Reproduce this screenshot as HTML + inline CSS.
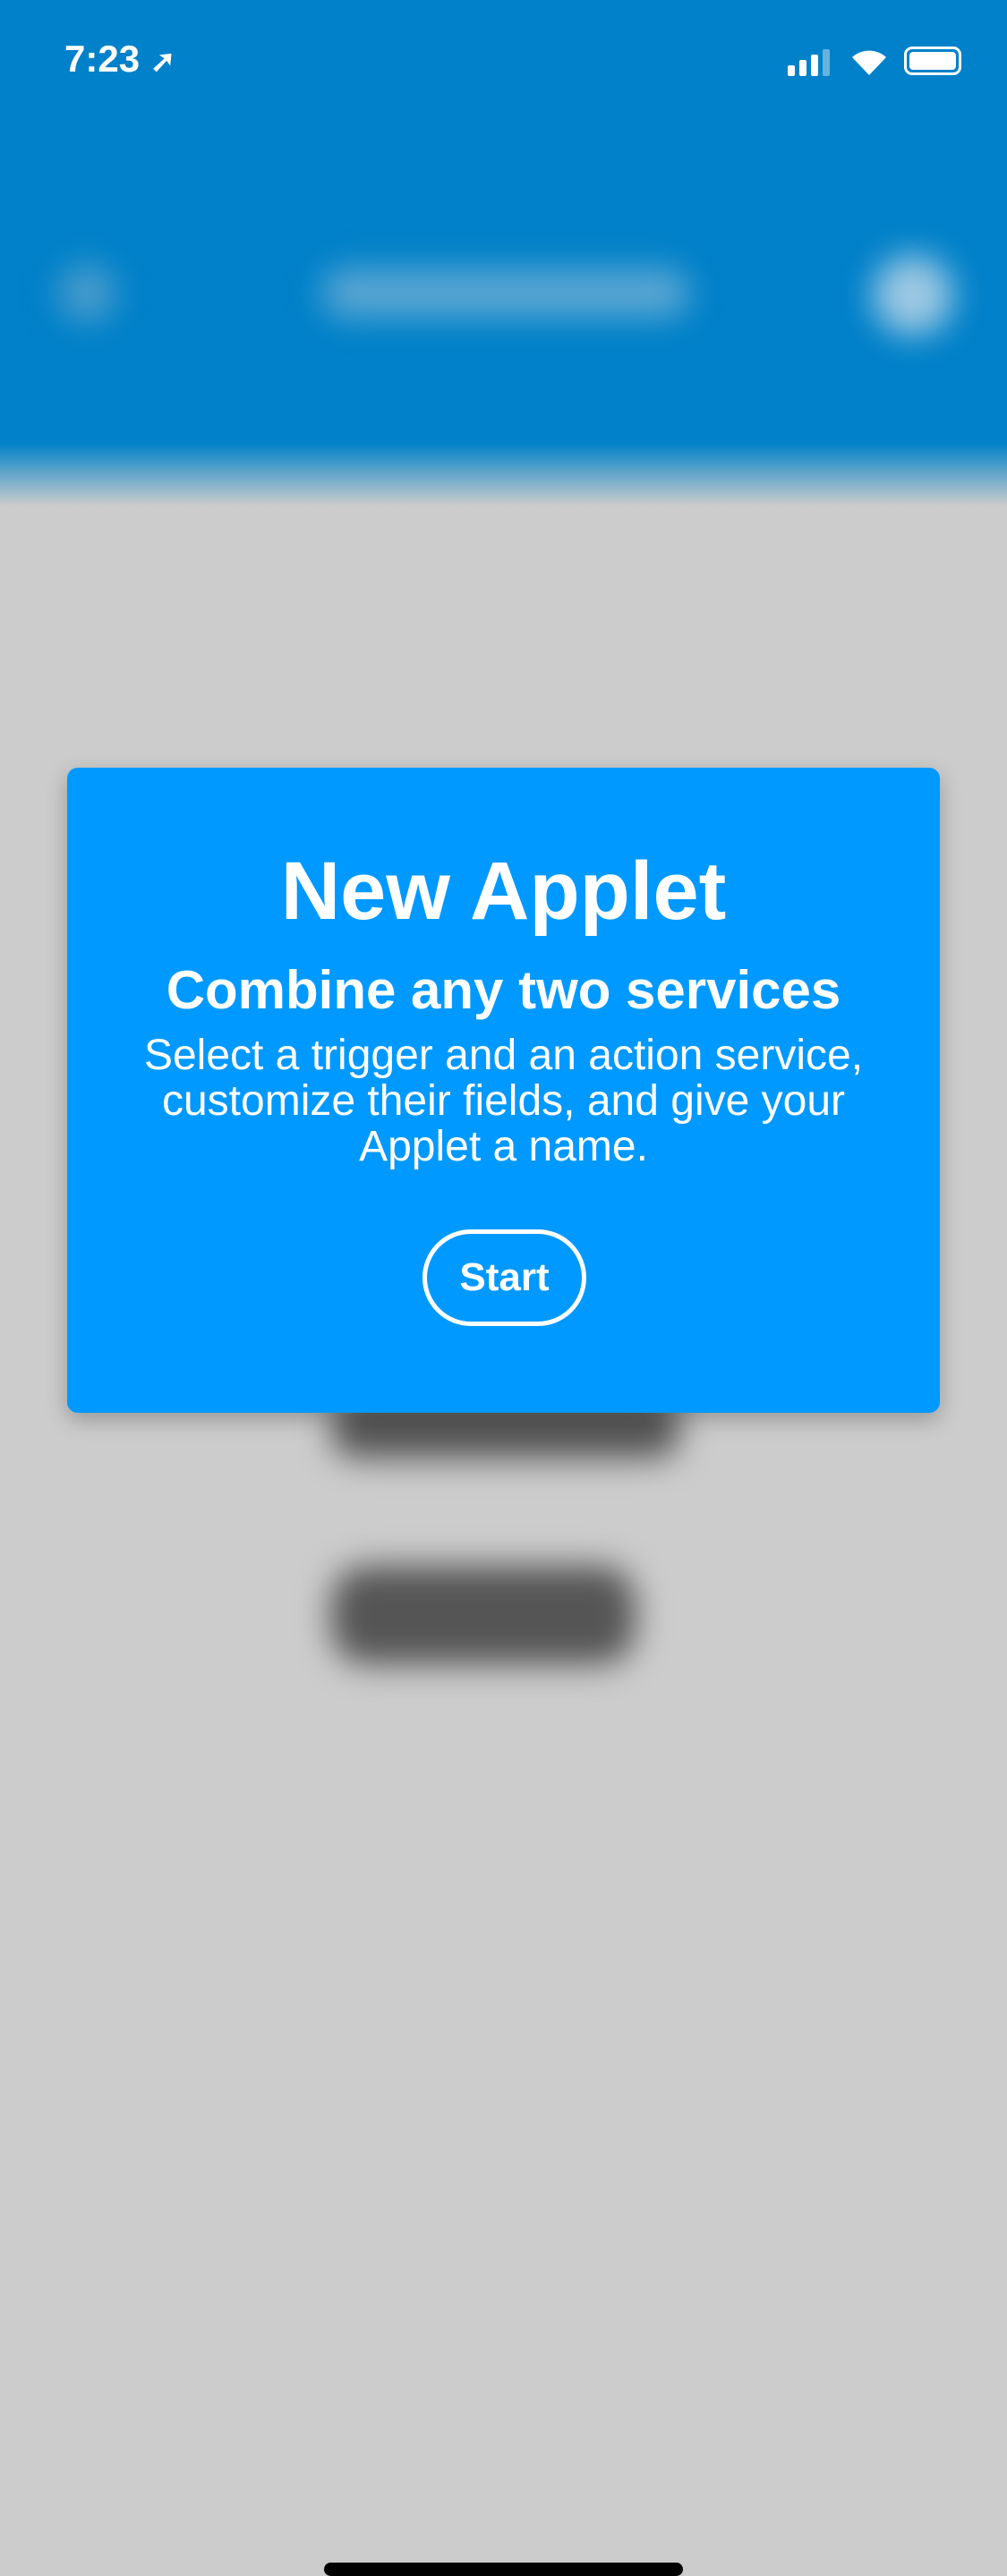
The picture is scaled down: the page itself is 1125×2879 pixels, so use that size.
<!DOCTYPE html>
<html><head><meta charset="utf-8"><style>
body{margin:0;width:1125px;height:2436px;background:#cbcccb;position:relative;overflow:hidden;font-family:"Liberation Sans",sans-serif}
.hdr{position:absolute;left:0;top:0;width:1125px;height:565px;background:linear-gradient(#0081c9 0,#0081c9 495px,#cbcccb 565px)}
.blur{position:absolute;filter:blur(18px)}
.card{position:absolute;left:75px;top:858px;width:975px;height:721px;background:#0099ff;border-radius:12px;box-shadow:0 8px 24px rgba(0,0,0,.25);color:#fff;text-align:center}
.t1{position:absolute;top:86px;width:100%;font-size:92px;font-weight:bold}
.t2{position:absolute;top:214px;width:100%;font-size:60px;font-weight:bold}
.t3{position:absolute;top:296px;width:100%;font-size:48px;line-height:51px}
.btn{position:absolute;left:397px;top:516px;width:173px;height:98px;border:5px solid #fff;border-radius:55px;font-size:44px;font-weight:bold;line-height:98px}
</style></head><body>
<div class="hdr"></div>
<div class="blur" style="left:65px;top:295px;width:65px;height:65px;border-radius:50%;background:#4a9ccc"></div>
<div class="blur" style="left:360px;top:300px;width:410px;height:55px;border-radius:25px;background:#5aa6d2"></div>
<div class="blur" style="left:975px;top:285px;width:90px;height:90px;border-radius:50%;background:#9cc8e2"></div>
<div style="position:absolute;left:72px;top:42px;color:#fff;font-size:42px;font-weight:bold">7:23 <span style="font-size:34px">➚</span></div>
<div style="position:absolute;left:880px;top:55px;display:flex;align-items:flex-end;gap:5px">
<div style="width:8px;height:12px;background:#fff;border-radius:2px"></div><div style="width:8px;height:18px;background:#fff;border-radius:2px"></div><div style="width:8px;height:24px;background:#fff;border-radius:2px"></div><div style="width:8px;height:30px;background:rgba(255,255,255,.4);border-radius:2px"></div></div>
<svg style="position:absolute;left:948px;top:50px" width="46" height="36" viewBox="0 0 46 36"><path d="M23 34 L4 14 A28 28 0 0 1 42 14 Z" fill="#fff"/></svg>
<div style="position:absolute;left:1010px;top:52px;width:64px;height:32px;border:3px solid #fff;border-radius:9px;box-sizing:border-box;padding:3px"><div style="width:100%;height:100%;background:#fff;border-radius:4px"></div></div>
<div class="blur" style="left:370px;top:1560px;width:390px;height:70px;border-radius:30px;background:#555"></div>
<div class="blur" style="left:370px;top:1750px;width:340px;height:110px;border-radius:40px;background:#555"></div>
<div class="card">
<div class="t1">New Applet</div>
<div class="t2">Combine any two services</div>
<div class="t3">Select a trigger and an action service,<br>customize their fields, and give your<br>Applet a name.</div>
<div class="btn">Start</div>
</div>
<div style="position:absolute;left:362px;top:2864px;width:401px;height:15px;border-radius:8px;background:#000"></div>
</body></html>
